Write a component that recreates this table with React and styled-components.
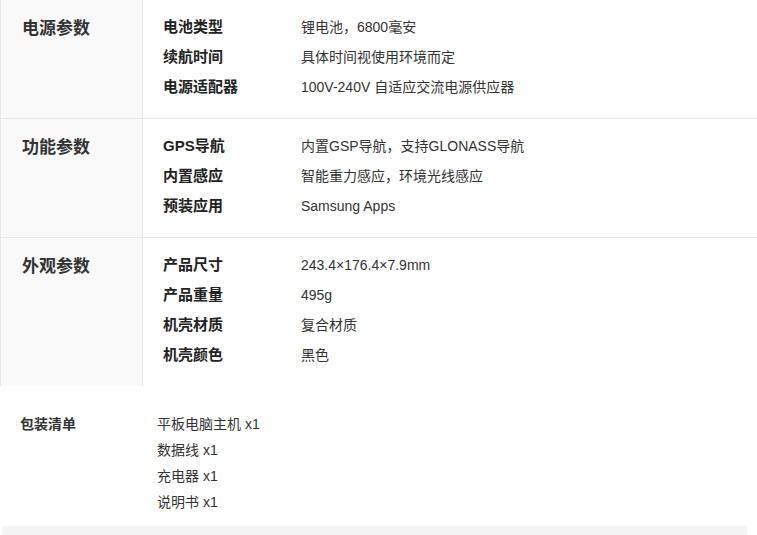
import styled, { createGlobalStyle } from "styled-components";

const Global = createGlobalStyle`
body {
  margin: 0;
  background: #fff;
  font-family: "Liberation Sans", Arial, "Noto Sans CJK SC", sans-serif;
  color: #333;
}
`

const Page = styled.div`
width: 757px;
`

const Spec = styled.div`
border-left: 1px solid #e8e8e8;
`

const Section = styled.div`
display: grid;
grid-template-columns: 142px 1fr;
border-bottom: ${p => (p.last ? "none" : "1px solid #e6e6e6")};
`

const Side = styled.div`
background: #f9f9f9;
border-right: 1px solid #e6e6e6;
padding: 16px 0 0 21px;
`

const SideTitle = styled.h3`
margin: 0;
font-size: 17px;
line-height: 26px;
font-weight: bold;
color: #333;
`

const Rows = styled.ul`
list-style: none;
margin: 0;
padding: 12px 0 16px 20px;
`

const Row = styled.li`
display: flex;
align-items: center;
height: 30px;
font-size: 14px;
line-height: 20px;
`

const Label = styled.span`
width: 138px;
font-weight: bold;
font-size: 15px;
color: #222;
`

const Value = styled.span`
color: #333;
`

const Pack = styled.div`
display: grid;
grid-template-columns: 137px 1fr;
padding: 25px 0 11px 20px;
`

const PackTitle = styled.h4`
margin: 0;
font-size: 14px;
line-height: 26px;
font-weight: bold;
color: #333;
`

const PackList = styled.ul`
list-style: none;
margin: 0;
padding: 0;
`

const PackItem = styled.li`
font-size: 14px;
line-height: 26px;
color: #333;
`

const Footer = styled.div`
margin: 0 10px 0 2px;
height: 30px;
background: #f4f4f4;
`

const specs = [
  {
    title: "电源参数",
    rows: [
      ["电池类型", "锂电池，6800毫安"],
      ["续航时间", "具体时间视使用环境而定"],
      ["电源适配器", "100V-240V 自适应交流电源供应器"],
    ],
  },
  {
    title: "功能参数",
    rows: [
      ["GPS导航", "内置GSP导航，支持GLONASS导航"],
      ["内置感应", "智能重力感应，环境光线感应"],
      ["预装应用", "Samsung Apps"],
    ],
  },
  {
    title: "外观参数",
    rows: [
      ["产品尺寸", "243.4×176.4×7.9mm"],
      ["产品重量", "495g"],
      ["机壳材质", "复合材质"],
      ["机壳颜色", "黑色"],
    ],
  },
];

const pack = ["平板电脑主机 x1", "数据线 x1", "充电器 x1", "说明书 x1"];

function App() {
  return (
    <Page>
      <Global />
      <Spec>
        {specs.map((s, i) => (
          <Section key={s.title} last={i === specs.length - 1}>
            <Side>
              <SideTitle>{s.title}</SideTitle>
            </Side>
            <Rows>
              {s.rows.map(([k, v]) => (
                <Row key={k}>
                  <Label>{k}</Label>
                  <Value>{v}</Value>
                </Row>
              ))}
            </Rows>
          </Section>
        ))}
      </Spec>
      <Pack>
        <PackTitle>包装清单</PackTitle>
        <PackList>
          {pack.map(p => (
            <PackItem key={p}>{p}</PackItem>
          ))}
        </PackList>
      </Pack>
      <Footer />
    </Page>
  );
}

export default App;
